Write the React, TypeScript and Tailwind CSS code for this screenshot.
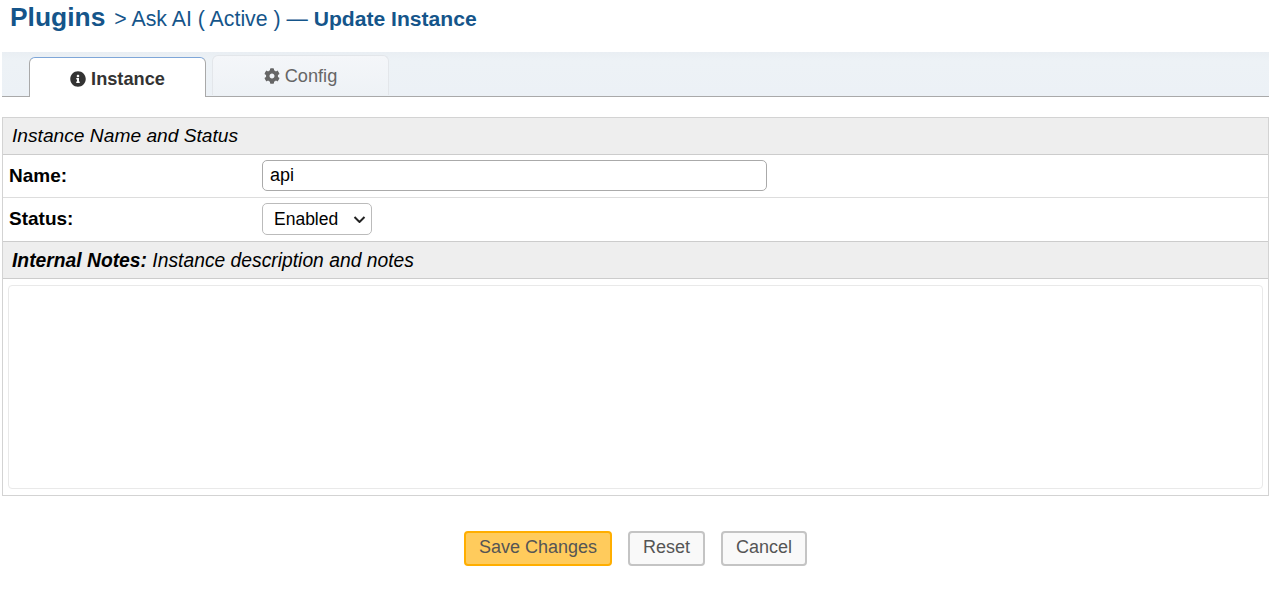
import React from 'react';
import { FaInfoCircle, FaCog } from 'react-icons/fa';

const App: React.FC = () => {
  return (
    <div className="w-[1272px] h-[597px] bg-white overflow-hidden font-['Liberation_Sans',Arial,sans-serif] text-[16px]">
      {/* Page title */}
      <div className="h-[52px] pl-[10px] pt-[2px] text-[#15558a] text-[21.3px] leading-[30px] whitespace-nowrap">
        <span className="text-[26.4px] font-bold">Plugins</span>
        <span className="ml-[9px]">&gt; Ask AI ( Active ) — </span>
        <span className="font-bold text-[21.1px]">Update Instance</span>
      </div>

      {/* Tabs */}
      <div className="mx-[2px] w-[1267px] h-[45px] bg-gradient-to-b from-[#e9eef3] via-[#edf2f6] via-20% to-[#ecf1f6] border-b border-[#a9a9a9] flex items-end pl-[27px] gap-[6px]">
        <div className="w-[177px] h-[40px] -mb-px pt-[5px] bg-white border border-b-0 border-[#a9a9a9] border-t-[#7ea6d8] rounded-t-[6px] flex items-center justify-center gap-[5px] text-[#333] font-bold text-[18.2px]">
          <FaInfoCircle className="w-[16px] h-[16px] -mt-[3px]" />
          <span>Instance</span>
        </div>
        <div className="w-[177px] h-[40px] mb-[1px] pt-[2px] bg-gradient-to-b from-[#f4f6f9] to-[#eef2f6] border border-b-0 border-[#e3e6ea] rounded-t-[6px] flex items-center justify-center gap-[5px] text-[#666] text-[18.2px]">
          <FaCog className="w-[16px] h-[16px] -mt-[2px]" />
          <span>Config</span>
        </div>
      </div>

      {/* Form */}
      <div className="mx-[2px] mt-[20px] w-[1267px] h-[379px] border border-[#d3d3d3] flex flex-col text-black">
        <div className="h-[37px] bg-[#eeeeee] border-b border-[#cccccc] pl-[9px] flex items-center italic text-[19.2px]">
          Instance Name and Status
        </div>
        <div className="h-[43px] border-b border-[#dddddd] flex items-center pl-[6px] pb-[2px]">
          <div className="w-[253px] pt-[2px] font-bold text-[19px]">Name:</div>
          <input
            readOnly
            value="api"
            className="w-[505px] h-[31px] border border-[#aaaaaa] rounded-[5px] px-[7px] text-[18px] outline-none"
          />
        </div>
        <div className="h-[43px] flex items-center pl-[6px] pb-[2px]">
          <div className="w-[253px] pt-[2px] font-bold text-[19px]">Status:</div>
          <div className="relative w-[110px] h-[32px]">
            <select className="w-full h-full appearance-none border border-[#bbbbbb] rounded-[5px] pl-[11px] pt-[2px] text-[17.5px] bg-white">
              <option>Enabled</option>
            </select>
            <svg viewBox="0 0 13 7" className="absolute right-[6px] top-[13px] w-[13px] h-[7px] pointer-events-none" fill="none" stroke="#222" strokeWidth="2">
              <path d="M1.5 1 L6.5 6 L11.5 1" />
            </svg>
          </div>
        </div>
        <div className="h-[38px] pt-[2px] bg-[#eeeeee] border-y border-[#cccccc] pl-[9px] flex items-center italic text-[19.3px]">
          <b>Internal Notes:</b>&nbsp;Instance description and notes
        </div>
        <div className="flex-1 px-[5px] pt-[6px] pb-[6px]">
          <div className="w-full h-full border border-[#e9e9e9] rounded-[4px]" />
        </div>
      </div>

      {/* Actions */}
      <div className="mt-[35px] flex justify-center gap-[16px] pr-[1px] text-[18px] text-[#555]">
        <button className="w-[148px] h-[35px] pb-[2px] bg-[#ffcb5c] border-2 border-[#ffae00] rounded-[4px]">Save Changes</button>
        <button className="w-[77px] h-[35px] pb-[2px] bg-[#f9f9f9] border-2 border-[#c4c4c4] rounded-[4px]">Reset</button>
        <button className="w-[86px] h-[35px] pb-[2px] bg-[#f9f9f9] border-2 border-[#c4c4c4] rounded-[4px]">Cancel</button>
      </div>
    </div>
  );
};

export default App;
